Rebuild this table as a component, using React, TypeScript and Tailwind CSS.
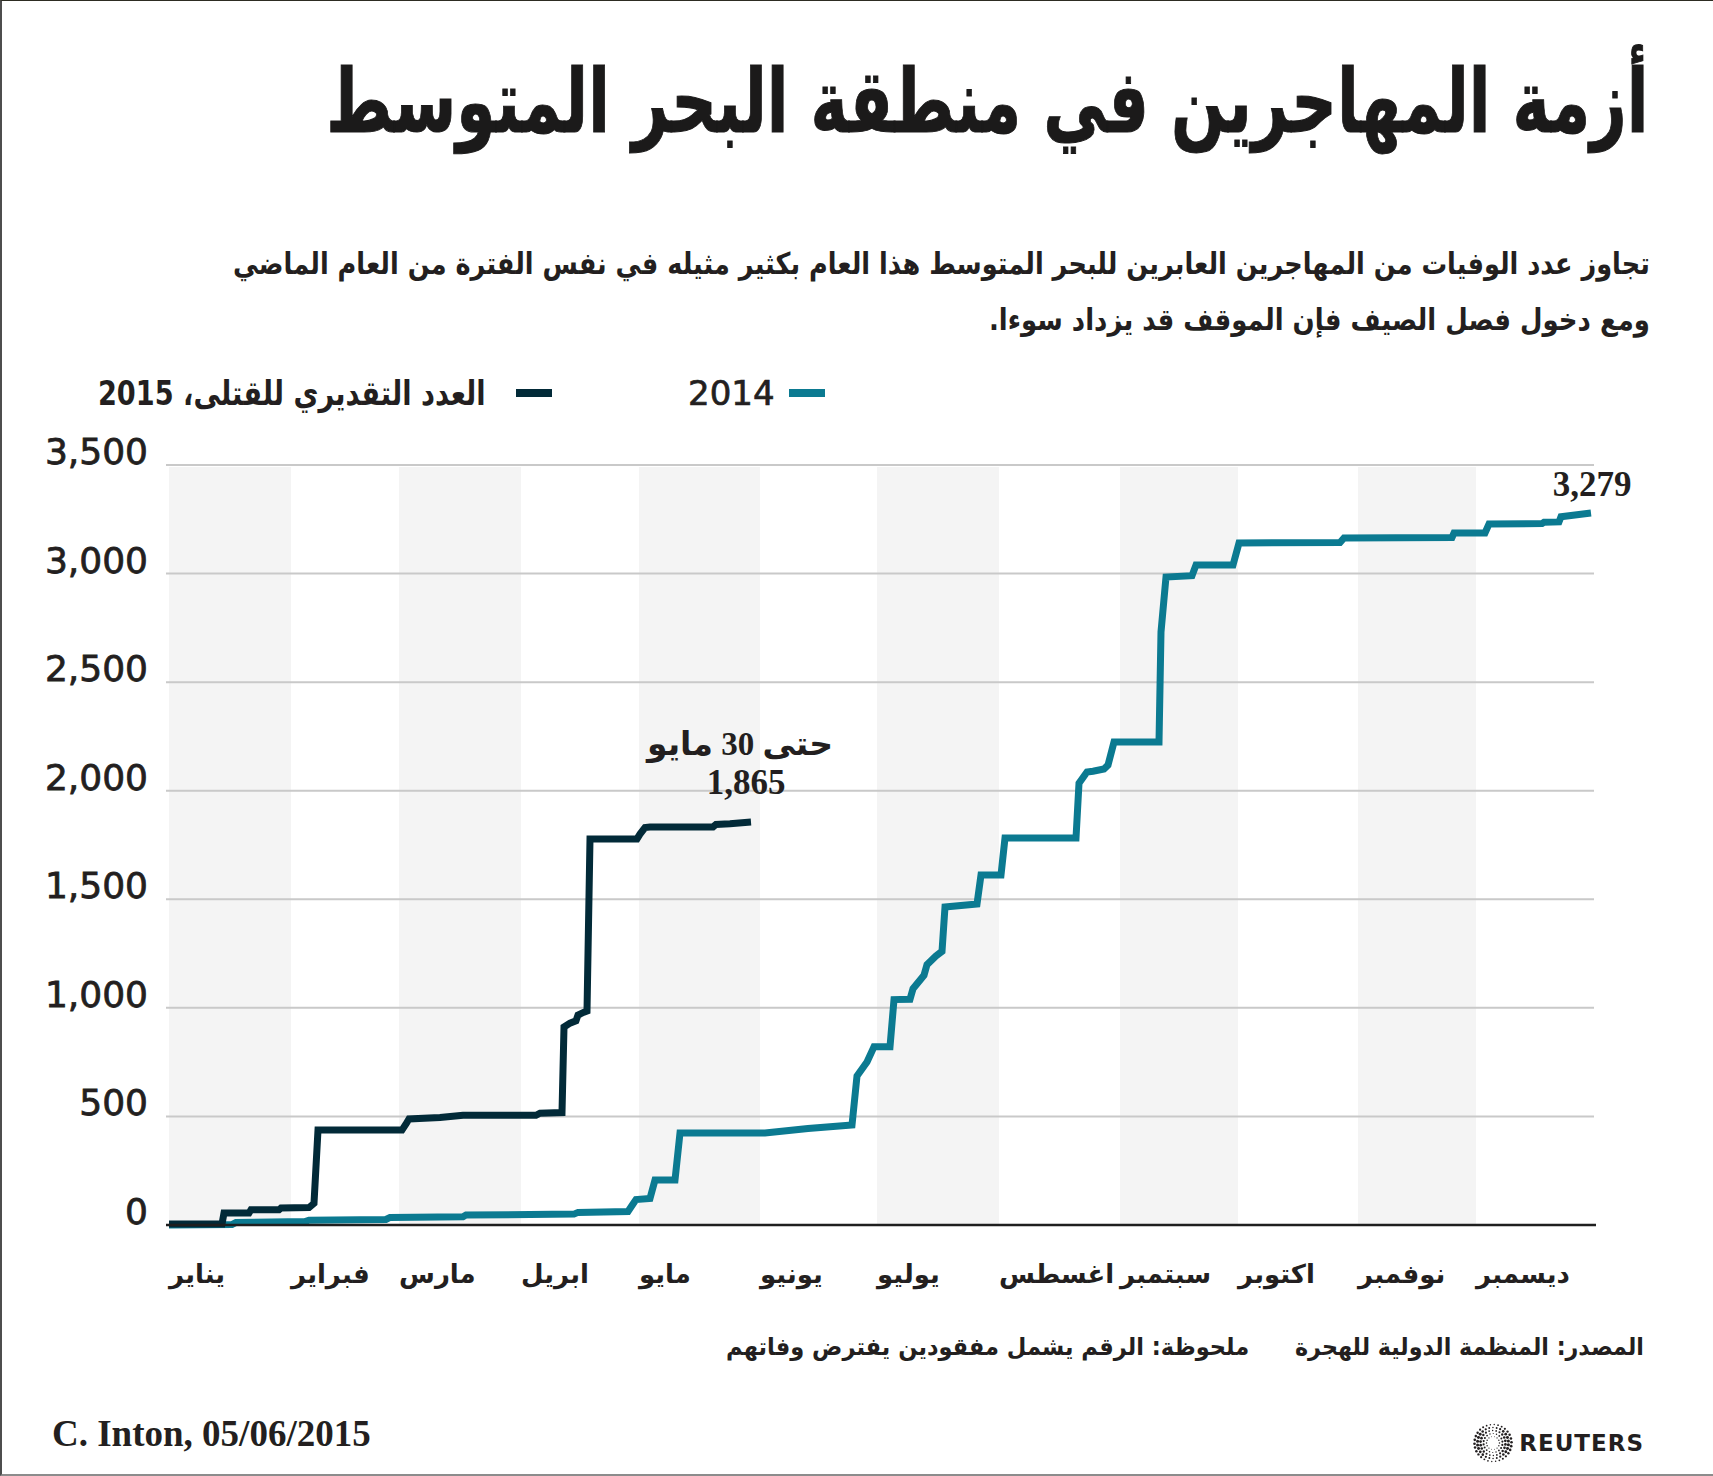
import React, { useLayoutEffect, useRef, useState } from "react";

// y = 1225 at 0 deaths, 108.57px per 500
const Y = (v: number) => 1225 - v * 0.217143;

const months = [
  { label: "يناير", w: 122, x: 169 },
  { label: "فبراير", w: 108, x: 291 },
  { label: "مارس", w: 122, x: 399 },
  { label: "ابريل", w: 118, x: 521 },
  { label: "مايو", w: 121, x: 639 },
  { label: "يونيو", w: 117, x: 760 },
  { label: "يوليو", w: 122, x: 877 },
  { label: "اغسطس", w: 121, x: 999 },
  { label: "سبتمبر", w: 118, x: 1120 },
  { label: "اكتوبر", w: 120, x: 1238 },
  { label: "نوفمبر", w: 118, x: 1358 },
  { label: "ديسمبر", w: 119, x: 1476 },
];

const ticks = [0, 500, 1000, 1500, 2000, 2500, 3000, 3500];

// [page x, deaths]
const line2015: [number, number][] = [
  [169, 5], [222, 5], [224, 55], [249, 55], [251, 70], [279, 70], [281, 78],
  [309, 80], [314, 100], [318, 437], [402, 437], [406, 465], [409, 488],
  [440, 495], [463, 505], [536, 505], [540, 515], [562, 518], [564, 912],
  [570, 930], [576, 940], [578, 967], [584, 980], [587, 985], [590, 1778],
  [637, 1778], [640, 1800], [645, 1830], [650, 1833], [713, 1833],
  [716, 1845], [730, 1848], [751, 1856],
];

const line2014: [number, number][] = [
  [169, 0], [232, 2], [236, 12], [305, 16], [309, 22], [386, 26], [390, 35],
  [463, 38], [466, 46], [574, 50], [578, 58], [628, 62], [632, 90],
  [636, 117], [650, 122], [655, 207], [675, 207], [680, 424], [765, 424],
  [808, 444], [852, 460], [857, 686], [867, 751], [874, 821], [890, 821],
  [894, 1038], [910, 1040], [913, 1088], [924, 1150], [927, 1199],
  [936, 1239], [942, 1260], [945, 1465], [977, 1478], [981, 1612],
  [1001, 1612], [1005, 1782], [1076, 1782], [1079, 2035], [1087, 2086],
  [1093, 2090], [1104, 2100], [1108, 2118], [1114, 2224], [1159, 2224],
  [1161, 2731], [1166, 2984], [1192, 2990], [1196, 3039], [1233, 3039],
  [1239, 3141], [1340, 3143], [1344, 3164], [1452, 3166], [1454, 3187],
  [1485, 3187], [1489, 3228], [1542, 3230], [1544, 3236], [1559, 3238],
  [1561, 3262], [1591, 3279],
];

const pts = (d: [number, number][]) =>
  d.map(([x, v]) => `${x},${Y(v).toFixed(1)}`).join(" ");

// squeezes a line of Arabic text horizontally so it spans the width measured in the reference
function Fit({
  width,
  box = "",
  className = "",
  children,
}: {
  width: number;
  box?: string;
  className?: string;
  children: React.ReactNode;
}) {
  const ref = useRef<HTMLSpanElement>(null);
  const [scale, setScale] = useState(1);
  useLayoutEffect(() => {
    if (ref.current) setScale(width / ref.current.offsetWidth);
  }, [width]);
  return (
    <span dir="ltr" className={`flex justify-end shrink-0 ${box}`}>
      <span
        ref={ref}
        dir="rtl"
        className={`inline-block shrink-0 whitespace-nowrap origin-right ${className}`}
        style={{ transform: `scaleX(${scale})` }}
      >
        {children}
      </span>
    </span>
  );
}

function ReutersLogo() {
  const rings = [
    { r: 6.5, n: 14, s: 0.7 },
    { r: 9.5, n: 18, s: 1.0 },
    { r: 12.5, n: 22, s: 1.25 },
    { r: 15.5, n: 26, s: 1.4 },
    { r: 18.5, n: 30, s: 1.2 },
  ];
  return (
    <svg width="40" height="40" viewBox="0 0 40 40">
      {rings.map((ring, i) =>
        Array.from({ length: ring.n }).map((_, j) => {
          const a = (j / ring.n) * Math.PI * 2 + i * 0.2;
          const k = 0.55 + 0.55 * Math.abs(Math.cos(a));
          return (
            <circle
              key={`${i}-${j}`}
              cx={20 + ring.r * Math.cos(a)}
              cy={20 + ring.r * Math.sin(a)}
              r={ring.s * k}
              fill="#231f20"
            />
          );
        })
      )}
    </svg>
  );
}

const arabic = "font-['DejaVu_Sans',sans-serif]";

export default function App() {
  return (
    <div className="w-[1713px] h-[1476px] bg-white border-t border-t-[#2d2c22] border-l-2 border-l-[#4d4d4d] border-b-2 border-b-[#8c8c8c] flex flex-col text-[#231f20] overflow-hidden">
      {/* Title */}
      <div className="h-[170px] pt-[51px] pr-[65px] flex justify-end">
        <h1>
          <Fit width={1322} className={`${arabic} font-bold text-[88px] leading-[100px] text-[#1b1a1a] [-webkit-text-stroke:1px_#1b1a1a]`}>
            أزمة المهاجرين في منطقة البحر المتوسط
          </Fit>
        </h1>
      </div>

      {/* Subtitle */}
      <div className={`h-[179px] pt-[65px] pr-[63px] flex flex-col items-end ${arabic} font-bold text-[30px] leading-[56px]`}>
        <Fit width={1417}>
          تجاوز عدد الوفيات من المهاجرين العابرين للبحر المتوسط هذا العام بكثير
          مثيله في نفس الفترة من العام الماضي
        </Fit>
        <Fit width={661}>ومع دخول فصل الصيف فإن الموقف قد يزداد سوءا.</Fit>
      </div>

      {/* Legend */}
      <div className="h-[75px] pt-[23px] pl-[96px] flex items-start font-['DejaVu_Sans',sans-serif] text-[34px] leading-[40px]">
        <Fit width={388} box="w-[388px]" className="font-bold">
          العدد التقديري للقتلى، 2015
        </Fit>
        <span className="ml-[30px] mt-[16px] w-[36px] h-[8px] bg-[#022a38]" />
        <span className="ml-[136px] w-[88px] [-webkit-text-stroke:0.7px_#231f20]">2014</span>
        <span className="ml-[13px] mt-[16px] w-[36px] h-[8px] bg-[#0b7a91]" />
      </div>

      {/* Chart */}
      <svg width="1711" height="820" viewBox="2 425 1711 820" className="block shrink-0">
        {months.map((m, i) =>
          i % 2 === 0 ? (
            <rect key={m.label} x={m.x} y={467} width={m.w} height={757} fill="#f4f4f4" />
          ) : null
        )}
        {ticks.map((t) =>
          t === 0 ? null : (
            <line key={t} x1={166} x2={1594} y1={Y(t)} y2={Y(t)} stroke="#c9c9c9" strokeWidth={2} />
          )
        )}
        {ticks.map((t) => (
          <text
            key={`l${t}`}
            x={148}
            y={Y(t) - 1}
            textAnchor="end"
            fontFamily="'DejaVu Sans', sans-serif"
            fontSize={36}
            fill="#231f20"
            stroke="#231f20"
            strokeWidth={0.8}
          >
            {t.toLocaleString("en-US")}
          </text>
        ))}
        <polyline points={pts(line2014)} fill="none" stroke="#0b7a91" strokeWidth={7} strokeLinejoin="miter" />
        <polyline points={pts(line2015)} fill="none" stroke="#022a38" strokeWidth={7} strokeLinejoin="miter" />
        <line x1={166} x2={1596} y1={1225} y2={1225} stroke="#1f1f1f" strokeWidth={2.5} />

        <text x={740} y={755} textAnchor="middle" direction="rtl" fontFamily="'Liberation Serif', 'DejaVu Sans', serif" fontWeight="bold" fontSize={33} fill="#231f20">
          حتى 30 مايو
        </text>
        <text x={746} y={794} textAnchor="middle" fontFamily="'Liberation Serif', serif" fontWeight="bold" fontSize={35} fill="#231f20">
          1,865
        </text>
        <text x={1592} y={496} textAnchor="middle" fontFamily="'Liberation Serif', serif" fontWeight="bold" fontSize={35} fill="#231f20">
          3,279
        </text>
      </svg>

      {/* Month labels */}
      <div className="h-[55px] pt-[14px] pl-[167px] grid grid-cols-[122px_108px_122px_118px_121px_117px_122px_121px_118px_120px_118px_119px] font-['DejaVu_Sans',sans-serif] font-bold text-[26px] leading-[30px]">
        {months.map((m) => (
          <div key={m.label} className="text-left whitespace-nowrap">
            <span dir="rtl">{m.label}</span>
          </div>
        ))}
      </div>

      {/* Notes */}
      <div
        dir="rtl"
        className={`h-[80px] pt-[32px] pr-[69px] flex gap-[46px] ${arabic} font-bold text-[24px] leading-[30px]`}
      >
        <Fit width={349} box="w-[349px]">المصدر: المنظمة الدولية للهجرة</Fit>
        <Fit width={523} box="w-[523px]">ملحوظة: الرقم يشمل مفقودين يفترض وفاتهم</Fit>
      </div>

      {/* Footer */}
      <div className="flex-1 pt-[32px] pl-[50px] pr-[69px] flex items-center justify-between">
        <span className="mb-[18px] font-['Liberation_Serif',serif] font-bold text-[37px] leading-[40px]">
          C. Inton, 05/06/2015
        </span>
        <div className="flex items-center gap-[6px]">
          <ReutersLogo />
          <span className="font-['DejaVu_Sans',sans-serif] font-bold text-[23px] tracking-[1px] leading-none">
            REUTERS
          </span>
        </div>
      </div>
    </div>
  );
}
